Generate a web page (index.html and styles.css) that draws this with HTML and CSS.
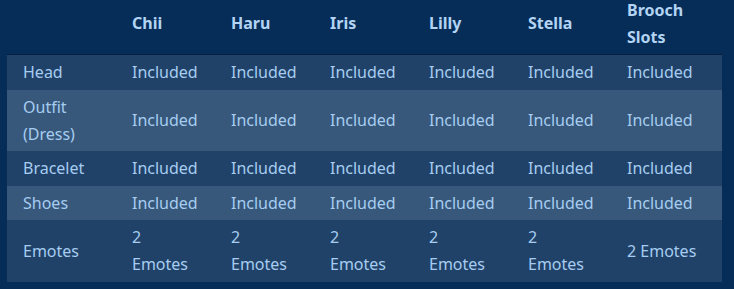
FILE: index.html
```html
<!DOCTYPE html>
<html>
<head>
<meta charset="utf-8">
<link rel="stylesheet" href="styles.css">
</head>
<body>
<div class="page">
<table class="slots">
  <colgroup>
    <col class="c-first">
    <col class="c-mid"><col class="c-mid"><col class="c-mid"><col class="c-mid"><col class="c-mid">
    <col class="c-last">
  </colgroup>
  <thead>
    <tr><th></th><th>Chii</th><th>Haru</th><th>Iris</th><th>Lilly</th><th>Stella</th><th>Brooch Slots</th></tr>
  </thead>
  <tbody>
    <tr><td>Head</td><td>Included</td><td>Included</td><td>Included</td><td>Included</td><td>Included</td><td>Included</td></tr>
    <tr><td>Outfit (Dress)</td><td>Included</td><td>Included</td><td>Included</td><td>Included</td><td>Included</td><td>Included</td></tr>
    <tr><td>Bracelet</td><td>Included</td><td>Included</td><td>Included</td><td>Included</td><td>Included</td><td>Included</td></tr>
    <tr><td>Shoes</td><td>Included</td><td>Included</td><td>Included</td><td>Included</td><td>Included</td><td>Included</td></tr>
    <tr><td>Emotes</td><td>2 Emotes</td><td>2 Emotes</td><td>2 Emotes</td><td>2 Emotes</td><td>2 Emotes</td><td>2 Emotes</td></tr>
  </tbody>
</table>
</div>
</body>
</html>
```
FILE: styles.css
```css
html, body {
  margin: 0;
  padding: 0;
  background: #062d58;
}
.page {
  padding: 0 7px;
  font-family: "Noto Sans", "Open Sans", sans-serif;
  font-size: 16px;
  line-height: 27px;
  color: #a6cdf1;
}
.slots {
  margin-top: -7px;
  width: 715px;
  table-layout: fixed;
  border-collapse: collapse;
}
.c-first { width: 109px; }
.c-mid { width: 99px; }
.c-last { width: 111px; }
.slots th, .slots td {
  padding: 3.8px 16px 3.7px;
  text-align: left;
  vertical-align: middle;
}
.slots th {
  font-weight: 700;
  color: #b3d4f3;
  border-bottom: 1px solid #041f3e;
}
.slots tbody tr:nth-child(odd) td {
  background: #214268;
}
.slots tbody tr:nth-child(even) td {
  background: #37587a;
}
```
